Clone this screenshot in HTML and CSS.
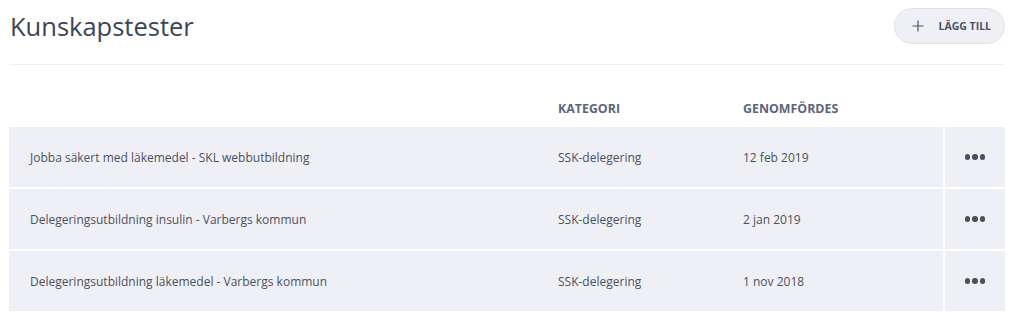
FILE: index.html
```html
<!DOCTYPE html>
<html lang="sv">
<head>
    <meta charset="UTF-8">
    <meta name="viewport" content="width=device-width, initial-scale=1.0">
    <title>Kunskapstester</title>
    <link rel="stylesheet" href="styles.css">
</head>
<body>
    <div class="page">
        <div class="page-header">
            <h1 class="title">Kunskapstester</h1>
            <button class="add-btn">
                <svg class="add-icon" width="12" height="12" viewBox="0 0 12 12">
                    <path d="M6 0.5V11.5M0.5 6H11.5" stroke="#4a5266" stroke-width="1.2" fill="none"/>
                </svg>
                <span>LÄGG TILL</span>
            </button>
        </div>

        <div class="table">
            <div class="table-head">
                <div class="col-name"></div>
                <div class="col-cat">KATEGORI</div>
                <div class="col-date">GENOMFÖRDES</div>
                <div class="col-actions"></div>
            </div>

            <div class="row">
                <div class="row-main">
                    <div class="col-name">Jobba säkert med läkemedel - SKL webbutbildning</div>
                    <div class="col-cat">SSK-delegering</div>
                    <div class="col-date">12 feb 2019</div>
                </div>
                <div class="col-actions"><span class="dots"><i></i><i></i><i></i></span></div>
            </div>

            <div class="row">
                <div class="row-main">
                    <div class="col-name">Delegeringsutbildning insulin - Varbergs kommun</div>
                    <div class="col-cat">SSK-delegering</div>
                    <div class="col-date">2 jan 2019</div>
                </div>
                <div class="col-actions"><span class="dots"><i></i><i></i><i></i></span></div>
            </div>

            <div class="row">
                <div class="row-main">
                    <div class="col-name">Delegeringsutbildning läkemedel - Varbergs kommun</div>
                    <div class="col-cat">SSK-delegering</div>
                    <div class="col-date">1 nov 2018</div>
                </div>
                <div class="col-actions"><span class="dots"><i></i><i></i><i></i></span></div>
            </div>
        </div>
    </div>
</body>
</html>
```

FILE: styles.css
```css
body {
    margin: 0;
    font-family: "Open Sans", sans-serif;
    background: #ffffff;
    color: #4a5060;
}

.page {
    padding: 0 18px 0 9px;
}

.page-header {
    display: flex;
    justify-content: space-between;
    align-items: center;
    height: 36px;
    padding: 8px 0 20px 0;
    border-bottom: 1px solid #eef0f3;
    margin-left: 1px;
}

.title {
    margin: 0;
    font-weight: 400;
    font-size: 25.5px;
    color: #3b4558;
}

.add-btn {
    display: flex;
    align-items: center;
    gap: 14px;
    height: 36px;
    padding: 0 13px 0 17px;
    border: 1px solid #dfe2ea;
    border-radius: 18px;
    background: #eef0f5;
    font-family: inherit;
    font-size: 10.5px;
    font-weight: 700;
    color: #4a5266;
    cursor: pointer;
}

.table {
    display: flex;
    flex-direction: column;
    gap: 2px;
}

.table-head {
    display: flex;
    height: 60px;
    align-items: flex-end;
    font-size: 12.4px;
    font-weight: 700;
    color: #5d6579;
}

.table-head > div {
    padding-bottom: 8px;
}

.row {
    display: flex;
    gap: 2px;
    height: 60px;
}

.row-main {
    flex: 1;
    display: flex;
    align-items: center;
    background: #eff0f5;
    font-size: 12px;
}

.col-name {
    flex: 1;
    padding-left: 21px;
}

.col-cat {
    width: 185px;
}

.col-date {
    width: 200px;
}

.row .col-actions {
    width: 60px;
    display: flex;
    align-items: center;
    justify-content: center;
    background: #eff0f5;
}

.table-head .col-actions {
    width: 62px;
}

.dots {
    display: flex;
    gap: 2px;
}

.dots i {
    width: 5.5px;
    height: 5.5px;
    border-radius: 50%;
    background: #4a4f62;
}
```
